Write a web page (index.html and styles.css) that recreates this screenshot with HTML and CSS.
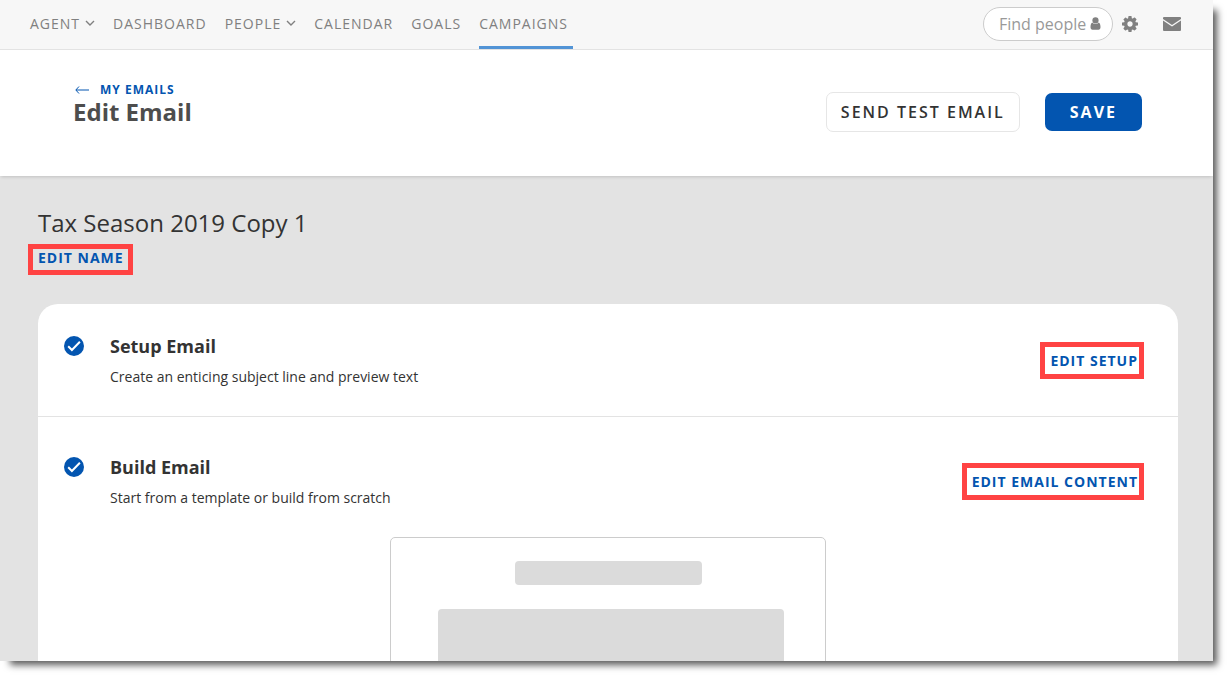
FILE: index.html
```html
<!DOCTYPE html>
<html lang="en">
<head>
<meta charset="utf-8">
<meta name="viewport" content="width=device-width, initial-scale=1">
<title>Edit Email</title>
<link rel="stylesheet" href="styles.css">
</head>
<body>
<div class="window">
  <header class="topbar">
    <nav class="nav" aria-label="Main">
      <a class="nav-link" href="#">AGENT <svg class="chevron" viewBox="0 0 10 6" aria-hidden="true"><path d="M1 1l4 4 4-4"/></svg></a>
      <a class="nav-link" href="#">DASHBOARD</a>
      <a class="nav-link" href="#">PEOPLE <svg class="chevron" viewBox="0 0 10 6" aria-hidden="true"><path d="M1 1l4 4 4-4"/></svg></a>
      <a class="nav-link" href="#">CALENDAR</a>
      <a class="nav-link" href="#">GOALS</a>
      <a class="nav-link active" href="#" aria-current="page">CAMPAIGNS</a>
    </nav>
    <div class="tools">
      <label class="search">
        <input class="search-input" type="text" placeholder="Find people" aria-label="Find people">
        <svg class="person" viewBox="0 0 10 13" aria-hidden="true"><circle cx="5" cy="3.4" r="3.1"/><path d="M2 5.4C.6 5.9 0 7.500 0 10c0 1.800.8 2.700 2 2.700h6c1.200 0 2-.9 2-2.700 0-2.500-.6-4.100-2-4.600C7.200 6.500 6.200 7 5 7S2.800 6.500 2 5.400z"/></svg>
      </label>
      <button class="icon-button" type="button" aria-label="Settings">
        <svg class="gear" viewBox="0 0 1536 1536" aria-hidden="true"><path d="M1024 768q0-106-75-181t-181-75-181 75-75 181 75 181 181 75 181-75 75-181zm512-109v222q0 12-8 23t-20 13l-185 28q-19 54-39 91 35 50 107 138 10 12 10 25t-9 23q-27 37-99 108t-94 71q-12 0-26-9l-138-108q-44 23-91 38-16 136-29 186-7 28-36 28H657q-14 0-24.500-8.500T621 1506l-28-184q-49-16-90-37l-141 107q-10 9-25 9-14 0-25-11-126-114-165-168-7-10-7-23 0-12 8-23 15-21 51-66.500t54-70.500q-27-50-41-99L29 913q-13-2-21-12.500T0 877V655q0-12 8-23t19-13l186-28q14-46 39-92-40-57-107-138-10-12-10-24 0-10 9-23 26-36 98.500-107.500T337 135q13 0 26 10l138 107q44-23 91-38 16-136 29-186 7-28 36-28h222q14 0 24.500 8.500T915 30l28 184q49 16 90 37l142-107q9-9 24-9 13 0 25 10 129 119 165 170 7 8 7 22 0 12-8 23-15 21-51 66.500t-54 70.500q26 50 41 98l183 28q13 2 21 12.500t8 23.500z"/></svg>
      </button>
      <button class="icon-button" type="button" aria-label="Messages">
        <svg class="mail" viewBox="0 0 18 14" aria-hidden="true"><path d="M1 0h16a1 1 0 0 1 1 1v1L9 8 0 2V1a1 1 0 0 1 1-1z"/><path d="M0 3.600l9 6 9-6V13a1 1 0 0 1-1 1H1a1 1 0 0 1-1-1z"/></svg>
      </button>
    </div>
  </header>

  <section class="page-head">
    <div class="heading">
      <a class="back" href="#"><svg class="arrow" viewBox="0 0 14 8" aria-hidden="true"><path d="M14 4H1M4 .5L.8 4 4 7.500"/></svg>MY EMAILS</a>
      <h1 class="page-title">Edit Email</h1>
    </div>
    <div class="actions">
      <button class="button" type="button">SEND TEST EMAIL</button>
      <button class="button primary" type="button">SAVE</button>
    </div>
  </section>

  <main class="content">
    <h2 class="email-name">Tax Season 2019 Copy 1</h2>
    <a class="edit-link name-link" href="#">EDIT NAME</a>
    <div class="card">
      <section class="step">
        <div class="step-row">
          <svg class="check" viewBox="0 0 20 20" aria-hidden="true"><circle cx="10" cy="10" r="10"/><path d="M4.200 10.300l3.700 3.700 8-8.200"/></svg>
          <div class="step-text">
            <h3 class="step-title">Setup Email</h3>
            <p class="step-note">Create an enticing subject line and preview text</p>
          </div>
          <a class="edit-link" href="#">EDIT SETUP</a>
        </div>
      </section>
      <section class="step">
        <div class="step-row">
          <svg class="check" viewBox="0 0 20 20" aria-hidden="true"><circle cx="10" cy="10" r="10"/><path d="M4.200 10.300l3.700 3.700 8-8.200"/></svg>
          <div class="step-text">
            <h3 class="step-title">Build Email</h3>
            <p class="step-note">Start from a template or build from scratch</p>
          </div>
          <a class="edit-link" href="#">EDIT EMAIL CONTENT</a>
        </div>
        <div class="preview">
          <div class="preview-title"></div>
          <div class="preview-block"></div>
        </div>
      </section>
    </div>
  </main>
</div>
</body>
</html>
```

FILE: styles.css
```css
* { box-sizing: border-box; }

body {
  min-height: 100vh;
  margin: 0;
  padding: 0 15px 15px 0;
  overflow: hidden;
  background: #fff;
  color: #333;
  font-family: "Open Sans", "Noto Sans", sans-serif;
}

h1, h2, h3, p { margin: 0; }
a { text-decoration: none; }
button, input { font: inherit; }

.window {
  display: flex;
  flex-direction: column;
  height: calc(100vh - 15px);
  overflow: hidden;
  background: #e3e3e3;
  box-shadow: 7px 7px 7px -3px rgba(0, 0, 0, 0.65);
}

.topbar {
  display: flex;
  flex: none;
  justify-content: space-between;
  height: 50px;
  padding: 0 32px 0 30px;
  background: #f7f7f7;
  border-bottom: 1px solid #e3e3e3;
}

.nav { display: flex; gap: 18px; }

.nav-link {
  display: flex;
  align-items: center;
  gap: 5px;
  color: #808080;
  font-size: 14px;
  letter-spacing: 1px;
  border-bottom: 3px solid transparent;
}

.nav-link.active { padding-right: 5px; border-bottom-color: #5294d6; }

.chevron {
  width: 10px;
  height: 6px;
  fill: none;
  stroke: #808080;
  stroke-width: 1.4;
}

.tools { display: flex; align-items: center; padding-bottom: 2px; }

.search {
  display: flex;
  align-items: center;
  width: 130px;
  height: 34px;
  margin-right: 9px;
  padding: 0 11px 0 15px;
  background: #fff;
  border: 1px solid #ccc;
  border-radius: 17px;
}

.search-input {
  flex: 1;
  min-width: 0;
  padding: 0;
  border: 0;
  outline: 0;
  background: none;
  color: #555;
  font-size: 16px;
}

.search-input::placeholder { color: #999; opacity: 1; }

.person { width: 11px; height: 13px; fill: #808080; }

.icon-button {
  display: flex;
  padding: 0;
  border: 0;
  background: none;
}

.icon-button + .icon-button { margin-left: 25px; }
.gear { width: 16px; height: 16px; fill: #808080; }
.mail { width: 18px; height: 14px; fill: #808080; }

.page-head {
  display: flex;
  flex: none;
  align-items: flex-start;
  justify-content: space-between;
  padding: 32px 71px 44px 73px;
  background: #fff;
  box-shadow: 0 2px 3px -1px rgba(0, 0, 0, 0.15);
}

.back {
  display: flex;
  align-items: center;
  gap: 11px;
  padding-left: 2px;
  color: #0355b0;
  font-size: 12px;
  font-weight: 700;
  line-height: 16px;
  letter-spacing: 1px;
}

.arrow {
  width: 14px;
  height: 8px;
  fill: none;
  stroke: #0355b0;
}

.page-title {
  color: #4d4d4d;
  font-size: 24px;
  font-weight: 700;
  line-height: 28px;
}

.actions { display: flex; align-items: center; gap: 25px; padding-top: 10px; }

.button {
  height: 40px;
  padding: 0 14px;
  background: #fff;
  color: #333;
  border: 1px solid #e6e6e6;
  border-radius: 7px;
  font-size: 16px;
  font-weight: 600;
  letter-spacing: 2px;
}

.button.primary {
  height: 38px;
  padding: 0 25px;
  background: #0355b0;
  color: #fff;
  border: 0;
  font-weight: 700;
}

.content {
  display: flex;
  flex: 1;
  flex-direction: column;
  align-items: flex-start;
  min-height: 0;
  padding: 31px 35px 0 38px;
}

.email-name {
  font-size: 24px;
  font-weight: 400;
  line-height: 32px;
}

.edit-link {
  flex: none;
  padding: 6px 1px 5px 5px;
  color: #0355b0;
  border: 5px solid #ff4343;
  font-size: 14px;
  font-weight: 700;
  line-height: 16px;
  letter-spacing: 1px;
}

.name-link { margin: 5px 0 0 -10px; padding: 1px 4px 4px 5px; }

.card {
  flex: none;
  width: 100%;
  margin-top: 29px;
  background: #fff;
  border-radius: 20px;
}

.step { padding: 28px 26px; }

.step + .step {
  padding-top: 36px;
  border-top: 1px solid #e3e3e3;
}

.step-row { display: flex; align-items: center; margin-right: 8px; }

.check {
  flex: none;
  align-self: flex-start;
  width: 20px;
  height: 20px;
  margin: 4px 26px 0 0;
  fill: #0355b0;
}

.check path { fill: none; stroke: #fff; stroke-width: 2; }

.step-text { flex: 1; }
.step-title { font-size: 18px; font-weight: 700; line-height: 28px; }

.step-note {
  margin-top: 6px;
  font-size: 14px;
  line-height: 22px;
}

.preview {
  width: 436px;
  max-width: 100%;
  height: 360px;
  margin: 28px auto 0;
  padding: 23px 41px 0 47px;
  border: 1px solid #ccc;
  border-radius: 5px;
}

.preview-title {
  width: 187px;
  height: 24px;
  margin-left: 77px;
  background: #dbdbdb;
  border-radius: 4px;
}

.preview-block {
  height: 240px;
  margin-top: 24px;
  background: #dbdbdb;
  border-radius: 4px;
}
```
